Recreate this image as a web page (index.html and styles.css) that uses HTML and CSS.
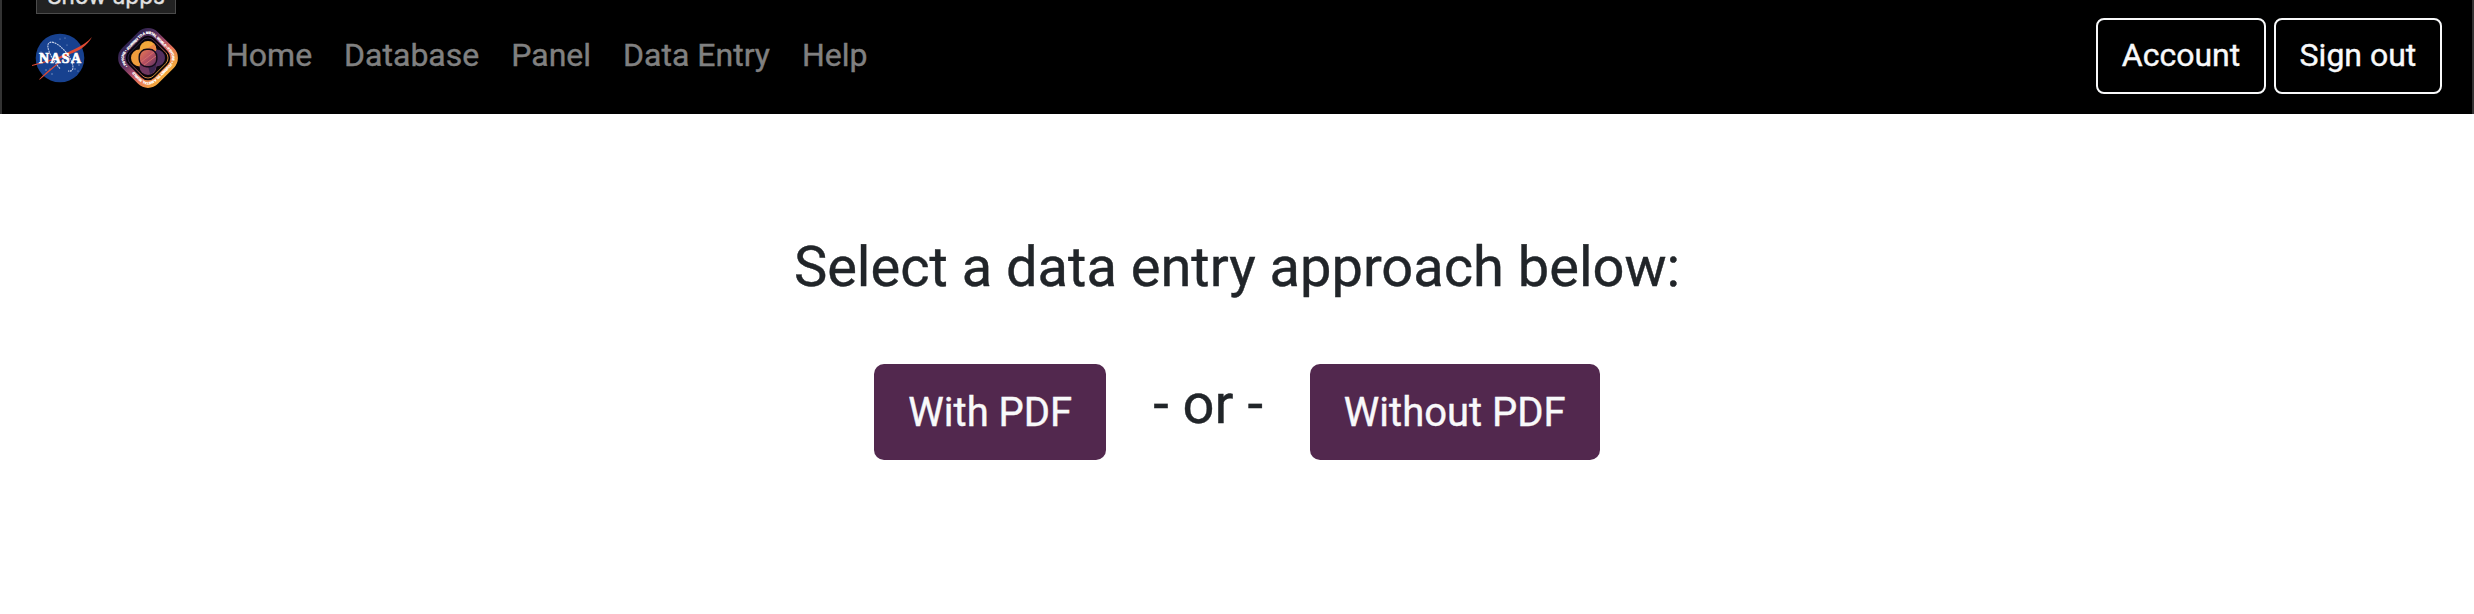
FILE: index.html
```html
<!DOCTYPE html>
<html lang="en">
<head>
<meta charset="utf-8">
<title>Data Entry</title>
<link rel="stylesheet" href="styles.css">
</head>
<body>
<div class="tooltip">Show apps</div>
<header class="navbar">
  <a class="brand" href="#">
    <svg class="nasa" viewBox="0 0 60 50" width="60" height="50" aria-label="NASA">
      <circle cx="28" cy="25" r="24.3" fill="#17418f"/>
      <g fill="#8fa6d0"><circle cx="28" cy="6" r=".6"/><circle cx="35" cy="12" r=".6"/><circle cx="33" cy="5" r=".6"/><circle cx="14" cy="37" r=".7"/><circle cx="20" cy="41" r=".7"/><circle cx="43" cy="36" r=".7"/><circle cx="47" cy="32" r=".7"/><circle cx="18" cy="36" r=".6"/><circle cx="9" cy="19" r=".6"/><circle cx="46" cy="38" r=".6"/></g>
      <path d="M28 35.500C20 27 13 13 17 10C22 6 34 17 39 27C42 34 42 39 36 38" fill="none" stroke="#c3cee6" stroke-width="1.100" stroke-dasharray="2 .7"/>
      <path d="M60 4C55 13 47 18 38 21L8 46.500L7 46.500C16 37 26 30 34 24L0 33V32L27 24C38 17 50 15 60 4Z" fill="#df4a33"/>
      <text class="nasa-text" x="7" y="29.500" textLength="42" lengthAdjust="spacing">NASA</text>
    </svg>
    <svg class="psyche" viewBox="0 0 60 60" width="60" height="60" aria-label="Psyche">
      <defs>
        <linearGradient id="rim" x1="0" y1=".5" x2="1" y2=".5"><stop offset="0" stop-color="#30234f"/><stop offset=".25" stop-color="#54305f"/><stop offset=".48" stop-color="#a44a69"/><stop offset=".68" stop-color="#e5715b"/><stop offset="1" stop-color="#f5ab3b"/></linearGradient>
        <linearGradient id="core" x1="0" y1="0" x2="1" y2="1"><stop offset="0" stop-color="#e97d50"/><stop offset=".5" stop-color="#b85062"/><stop offset="1" stop-color="#54305f"/></linearGradient>
        <path id="ring" d="M9.800 38Q1.800 30 9.800 22L22 9.800Q30 1.800 38 9.800L50.200 22Q58.200 30 50.200 38L38 50.200Q30 58.200 22 50.200Z"/>
      </defs>
      <rect x="4.750" y="4.750" width="50.500" height="50.500" rx="14" transform="rotate(45 30 30)" fill="url(#rim)"/>
      <rect x="11.500" y="11.500" width="37" height="37" rx="9.500" transform="rotate(45 30 30)" fill="#080409"/>
      <rect x="13.500" y="13.500" width="33" height="33" rx="8" transform="rotate(45 30 30)" fill="none" stroke="url(#rim)" stroke-width=".8"/>
      <text class="rim-text"><textPath href="#ring" textLength="134" lengthAdjust="spacing">• PSYCHE • JOURNEY TO A METAL WORLD • PSYCHE • JOURNEY TO A METAL WORLD</textPath></text>
      <circle cx="30" cy="21.500" r="8.500" fill="#f3a83b"/>
      <circle cx="21.500" cy="30" r="8.500" fill="#f19d3d"/>
      <circle cx="38.500" cy="30" r="8.500" fill="#54305f"/>
      <circle cx="30" cy="38.500" r="8.500" fill="#70375f"/>
      <path d="M24 24L36 16A8.500 8.500 0 0 1 38 23Z" fill="#ed8848"/>
      <path d="M30 38L38 34Q39 44 32 46Z" fill="#3a254c"/>
      <rect x="21.200" y="21.200" width="17.600" height="17.600" rx="7.500" fill="url(#core)" stroke="#140b17" stroke-width="1.400"/>
      <path d="M23 34L36 24M26 37L38 28" stroke="#d36d6a" stroke-width="1"/>
    </svg>
  </a>
  <nav class="links">
    <a href="#">Home</a><a href="#">Database</a><a href="#">Panel</a><a href="#">Data Entry</a><a href="#">Help</a>
  </nav>
  <div class="actions">
    <a class="btn-outline" href="#">Account</a>
    <a class="btn-outline" href="#">Sign out</a>
  </div>
</header>
<main class="content">
  <h1 class="title">Select a data entry approach below:</h1>
  <div class="choices">
    <a class="btn" href="#">With PDF</a>
    <span class="or">- or -</span>
    <a class="btn" href="#">Without PDF</a>
  </div>
</main>
</body>
</html>
```

FILE: styles.css
```css
* { box-sizing: border-box; }
body {
  margin: 0;
  min-height: 614px;
  background: #fff;
  color: #212529;
  font-family: Roboto, "Liberation Sans", sans-serif;
  -webkit-text-stroke: .4px currentColor;
  overflow: hidden;
}
a { color: inherit; text-decoration: none; }
.tooltip {
  position: absolute;
  left: 36px;
  top: -20px;
  width: 140px;
  height: 34px;
  border: 1px solid #4b4b4b;
  background: #222;
  color: #e2e2e2;
  font: 22.5px/30px Inter, sans-serif;
  text-align: center;
}
.navbar {
  height: 114px;
  padding: 0 30px;
  display: flex;
  align-items: flex-start;
  background: #000;
  border: solid #333;
  border-width: 0 2px;
}
.brand { display: flex; align-items: center; gap: 26px; padding-top: 28px; }
.nasa, .psyche { display: block; overflow: visible; -webkit-text-stroke: 0; }
.nasa-text { font: bold 14px "Liberation Serif", serif; fill: #fff; stroke: #fff; stroke-width: .7px; }
.rim-text { font: bold 3.3px "Liberation Sans Narrow", "Liberation Sans", sans-serif; fill: #fff; stroke: #fff; stroke-width: .25px; }
.links {
  display: flex;
  gap: 32px;
  margin-left: 48px;
  padding-top: 31px;
  color: #808080;
  font-size: 32px;
  line-height: 48px;
}
.actions { display: flex; gap: 8px; margin-left: auto; padding-top: 18px; }
.btn-outline {
  height: 76px;
  padding: 11px 23.7px;
  border: 2px solid #f8f9fa;
  border-radius: 8px;
  color: #f8f9fa;
  font-size: 32px;
  line-height: 48px;
}
.content { padding-top: 120px; text-align: center; }
.title { margin: 0; font-size: 56px; font-weight: 400; line-height: 67px; }
.choices { display: flex; justify-content: center; align-items: flex-start; margin-top: 63px; }
.btn {
  height: 96px;
  padding: 19px 34px;
  border-radius: 10px;
  background: #52284e;
  color: #f8f9fa;
  font-size: 40px;
  line-height: 60px;
}
.or { margin: 7px 47px 0; font-size: 56px; line-height: 67px; }
```
